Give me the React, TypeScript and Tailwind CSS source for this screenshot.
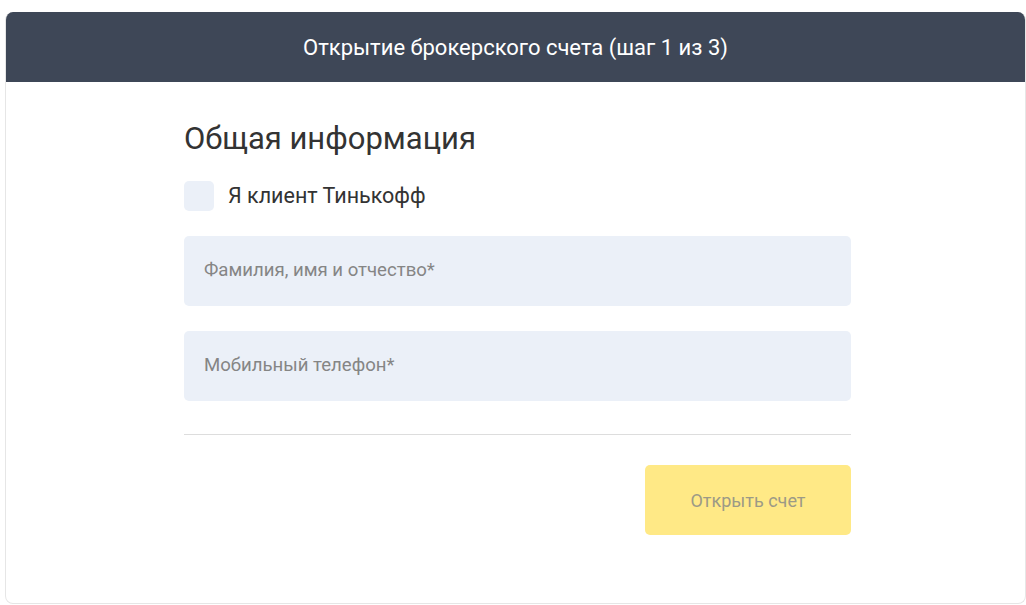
import React from "react";

const App: React.FC = () => {
  return (
    <div className="min-h-screen bg-white pt-[12px] pl-[5px] font-['Roboto','Noto_Sans',sans-serif]">
      <div className="w-[1021px] h-[592px] rounded-[8px] border-x border-b border-[#e6e6e6] overflow-hidden flex flex-col">
        <div className="h-[70px] shrink-0 bg-[#3e4757] flex items-center justify-center">
          <h1 className="text-white text-[22px] font-normal">
            Открытие брокерского счета (шаг 1 из 3)
          </h1>
        </div>
        <div className="pl-[178px] pt-[37px]">
          <div className="w-[667px] flex flex-col">
            <h2 className="text-[31px] leading-[40px] text-[#333333] font-normal">
              Общая информация
            </h2>
            <label className="mt-[21px] flex items-center gap-[14px]">
              <span className="w-[30px] h-[30px] rounded-[5px] bg-[#ebf0f8]" />
              <span className="text-[21.5px] text-[#333333]">Я клиент Тинькофф</span>
            </label>
            <div className="mt-[24px] h-[70px] rounded-[5px] bg-[#ebf0f8] flex items-center px-[20px]">
              <span className="text-[18.6px] text-[#858585]">Фамилия, имя и отчество*</span>
            </div>
            <div className="mt-[25px] h-[70px] rounded-[5px] bg-[#ebf0f8] flex items-center px-[20px]">
              <span className="text-[18.6px] text-[#858585]">Мобильный телефон*</span>
            </div>
            <div className="mt-[33px] h-px bg-[#dddddd]" />
            <div className="mt-[30px] flex justify-end">
              <button className="w-[206px] h-[70px] rounded-[5px] bg-[#ffe986] text-[18px] text-[#9c9a86]">
                Открыть счет
              </button>
            </div>
          </div>
        </div>
      </div>
    </div>
  );
};

export default App;
